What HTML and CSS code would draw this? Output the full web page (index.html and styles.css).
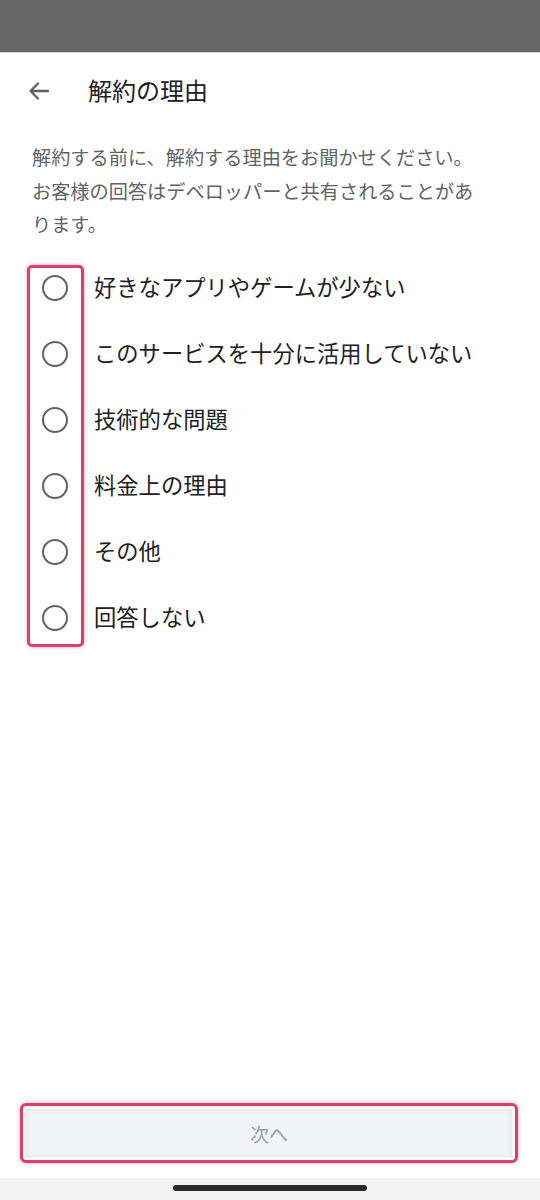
FILE: index.html
```html
<!DOCTYPE html>
<html lang="ja">
<head>
<meta charset="utf-8">
<link rel="stylesheet" href="styles.css">
</head>
<body>
<div class="screen">
  <div class="statusbar"></div>
  <div class="header">
    <svg class="back" width="24" height="24" viewBox="0 0 24 24"><path d="M21 12H4M11 4.5L3.5 12L11 19.5" fill="none" stroke="#5f6368" stroke-width="2.4" stroke-linecap="round" stroke-linejoin="round"/></svg>
    <h1 class="title">解約の理由</h1>
  </div>
  <p class="desc">解約する前に、解約する理由をお聞かせください。お客様の回答はデベロッパーと共有されることがあります。</p>
  <div class="options">
    <div class="row"><span class="radio"></span><span class="label">好きなアプリやゲームが少ない</span></div>
    <div class="row"><span class="radio"></span><span class="label">このサービスを十分に活用していない</span></div>
    <div class="row"><span class="radio"></span><span class="label">技術的な問題</span></div>
    <div class="row"><span class="radio"></span><span class="label">料金上の理由</span></div>
    <div class="row"><span class="radio"></span><span class="label">その他</span></div>
    <div class="row"><span class="radio"></span><span class="label">回答しない</span></div>
    <div class="highlight"></div>
  </div>
  <div class="spacer"></div>
  <div class="footer">
    <button class="next">次へ</button>
  </div>
  <div class="navbar"><span class="home"></span></div>
</div>
</body>
</html>
```
FILE: styles.css
```css
* { box-sizing: border-box; }
html, body { margin: 0; padding: 0; background: #fff; }
body {
  font-family: "Noto Sans CJK JP", "Noto Sans", sans-serif;
  color: #202124;
}
.screen {
  width: 540px;
  height: 1200px;
  display: flex;
  flex-direction: column;
  overflow: hidden;
}
.statusbar {
  height: 53px;
  flex: none;
  background: #666666;
  border-bottom: 1px solid #d8d8d8;
}
.header {
  height: 75px;
  flex: none;
  display: flex;
  align-items: center;
  padding-left: 27px;
}
.back { display: block; margin-right: 37px; }
.title {
  margin: 0;
  font-size: 24px;
  font-weight: 400;
  color: #202124;
  line-height: 1;
  padding-bottom: 2px;
}
.desc {
  margin: 13px 0 0 32px;
  width: 448px;
  font-size: 19.2px;
  line-height: 33.5px;
  color: #5f6368;
}
.options {
  position: relative;
  margin-top: 13px;
}
.row {
  height: 66px;
  display: flex;
  align-items: center;
  padding-left: 42px;
}
.radio {
  width: 26px;
  height: 26px;
  border: 2.5px solid #5f6368;
  border-radius: 50%;
  flex: none;
  margin-right: 26px;
}
.label {
  font-size: 22.3px;
  color: #202124;
  line-height: 1;
  padding-bottom: 2px;
}
.highlight {
  position: absolute;
  left: 27px;
  top: 10px;
  width: 57px;
  height: 382px;
  border: 3px solid #d9416d;
  border-radius: 5px;
  box-shadow: 0 0 4px rgba(217, 65, 109, 0.45);
  pointer-events: none;
}
.spacer { flex: 1; }
.footer {
  flex: none;
  padding: 0 22px 15px 20px;
}
.next {
  display: block;
  width: 100%;
  height: 60px;
  background: #f1f3f4;
  border: 3px solid #d9416d;
  border-radius: 6px;
  box-shadow: 0 0 4px rgba(217, 65, 109, 0.45), inset 0 0 0 3px #f7f7f8, inset 0 0 5px 4px #e6e7e9;
  font-family: "Noto Sans CJK JP", sans-serif;
  font-size: 19px;
  color: #9aa0a6;
}
.navbar {
  height: 22px;
  flex: none;
  background: #f2f2f2;
  display: flex;
  justify-content: center;
  padding-top: 7px;
}
.home {
  width: 194px;
  height: 6px;
  border-radius: 3px;
  background: #2b2b2b;
}
```
